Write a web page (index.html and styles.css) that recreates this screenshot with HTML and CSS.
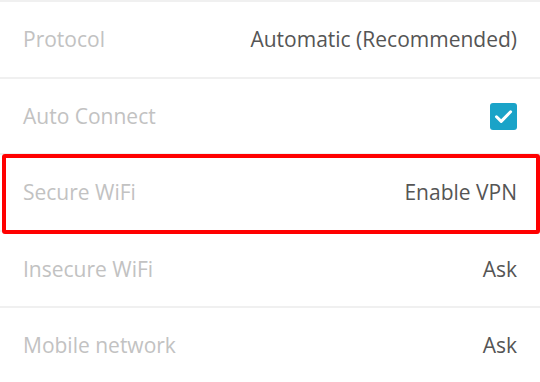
FILE: index.html
```html
<!DOCTYPE html>
<html>
<head>
<meta charset="utf-8">
<link rel="stylesheet" href="styles.css">
</head>
<body>
<div class="list">
  <div class="row">
    <span class="label">Protocol</span>
    <span class="value">Automatic (Recommended)</span>
  </div>
  <div class="row">
    <span class="label">Auto Connect</span>
    <span class="check">
      <svg width="27" height="27" viewBox="0 0 27 27">
        <rect x="0" y="0" width="27" height="27" rx="3" fill="#1aa3c8"/>
        <path d="M6.5 13.8 L11.2 18.4 L20.6 8.8" fill="none" stroke="#fff" stroke-width="3" stroke-linecap="round" stroke-linejoin="round"/>
      </svg>
    </span>
  </div>
  <div class="row highlighted">
    <span class="label">Secure WiFi</span>
    <span class="value">Enable VPN</span>
  </div>
  <div class="row">
    <span class="label">Insecure WiFi</span>
    <span class="value">Ask</span>
  </div>
  <div class="row">
    <span class="label">Mobile network</span>
    <span class="value">Ask</span>
  </div>
</div>
</body>
</html>
```

FILE: styles.css
```css
html, body {
  margin: 0;
  padding: 0;
  background: #ffffff;
  overflow: hidden;
}
body {
  width: 540px;
  height: 382px;
  font-family: "Open Sans", "Noto Sans", sans-serif;
}
.list {
  display: flex;
  flex-direction: column;
}
.row {
  position: relative;
  box-sizing: border-box;
  height: 76.5px;
  border-top: 2px solid #f0f0f0;
  display: flex;
  align-items: center;
  justify-content: space-between;
  padding: 0 23px;
  font-size: 21px;
}
.label {
  color: #c2c2c2;
}
.value {
  color: #555555;
}
.check {
  display: flex;
  margin-top: 2px;
}
.highlighted {
  z-index: 1;
}
.highlighted::after {
  content: "";
  position: absolute;
  left: 2px;
  right: 0;
  top: -1px;
  height: 80px;
  box-sizing: border-box;
  border: 4px solid #ff0000;
  border-radius: 3px;
}
```
